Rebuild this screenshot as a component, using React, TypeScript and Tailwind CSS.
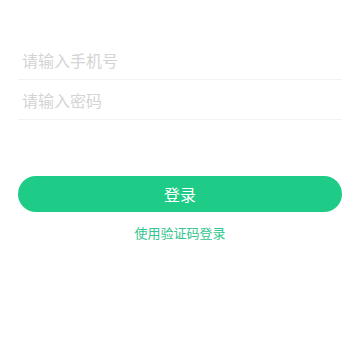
import { useState } from "react";

export default function App() {
  const [phone, setPhone] = useState("");
  const [password, setPassword] = useState("");

  return (
    <div
      className="w-[360px] h-[360px] bg-white px-[18px] pt-[40px]"
      style={{ fontFamily: '"Noto Sans CJK SC", "Noto Sans", sans-serif' }}
    >
      {/* Inputs */}
      <div className="flex h-[40px] items-center border-b border-[#f3f3f3]">
        <input
          value={phone}
          onChange={(e) => setPhone(e.target.value)}
          placeholder="请输入手机号"
          className="w-full px-1 text-[16px] leading-[20px] text-[#333] placeholder-[#d4d4d4] outline-none bg-transparent"
        />
      </div>
      <div className="flex h-[40px] items-center border-b border-[#f3f3f3]">
        <input
          type="password"
          value={password}
          onChange={(e) => setPassword(e.target.value)}
          placeholder="请输入密码"
          className="w-full px-1 text-[16px] leading-[20px] text-[#333] placeholder-[#d4d4d4] outline-none bg-transparent"
        />
      </div>

      {/* Actions */}
      <button className="mt-[56px] flex h-[36px] w-full items-center justify-center rounded-full bg-[#1ecb87] text-[16px] leading-[20px] text-white">
        登录
      </button>
      <div className="mt-[12px] text-center text-[13px] leading-[17px] text-[#33c58d]">
        使用验证码登录
      </div>
    </div>
  );
}
